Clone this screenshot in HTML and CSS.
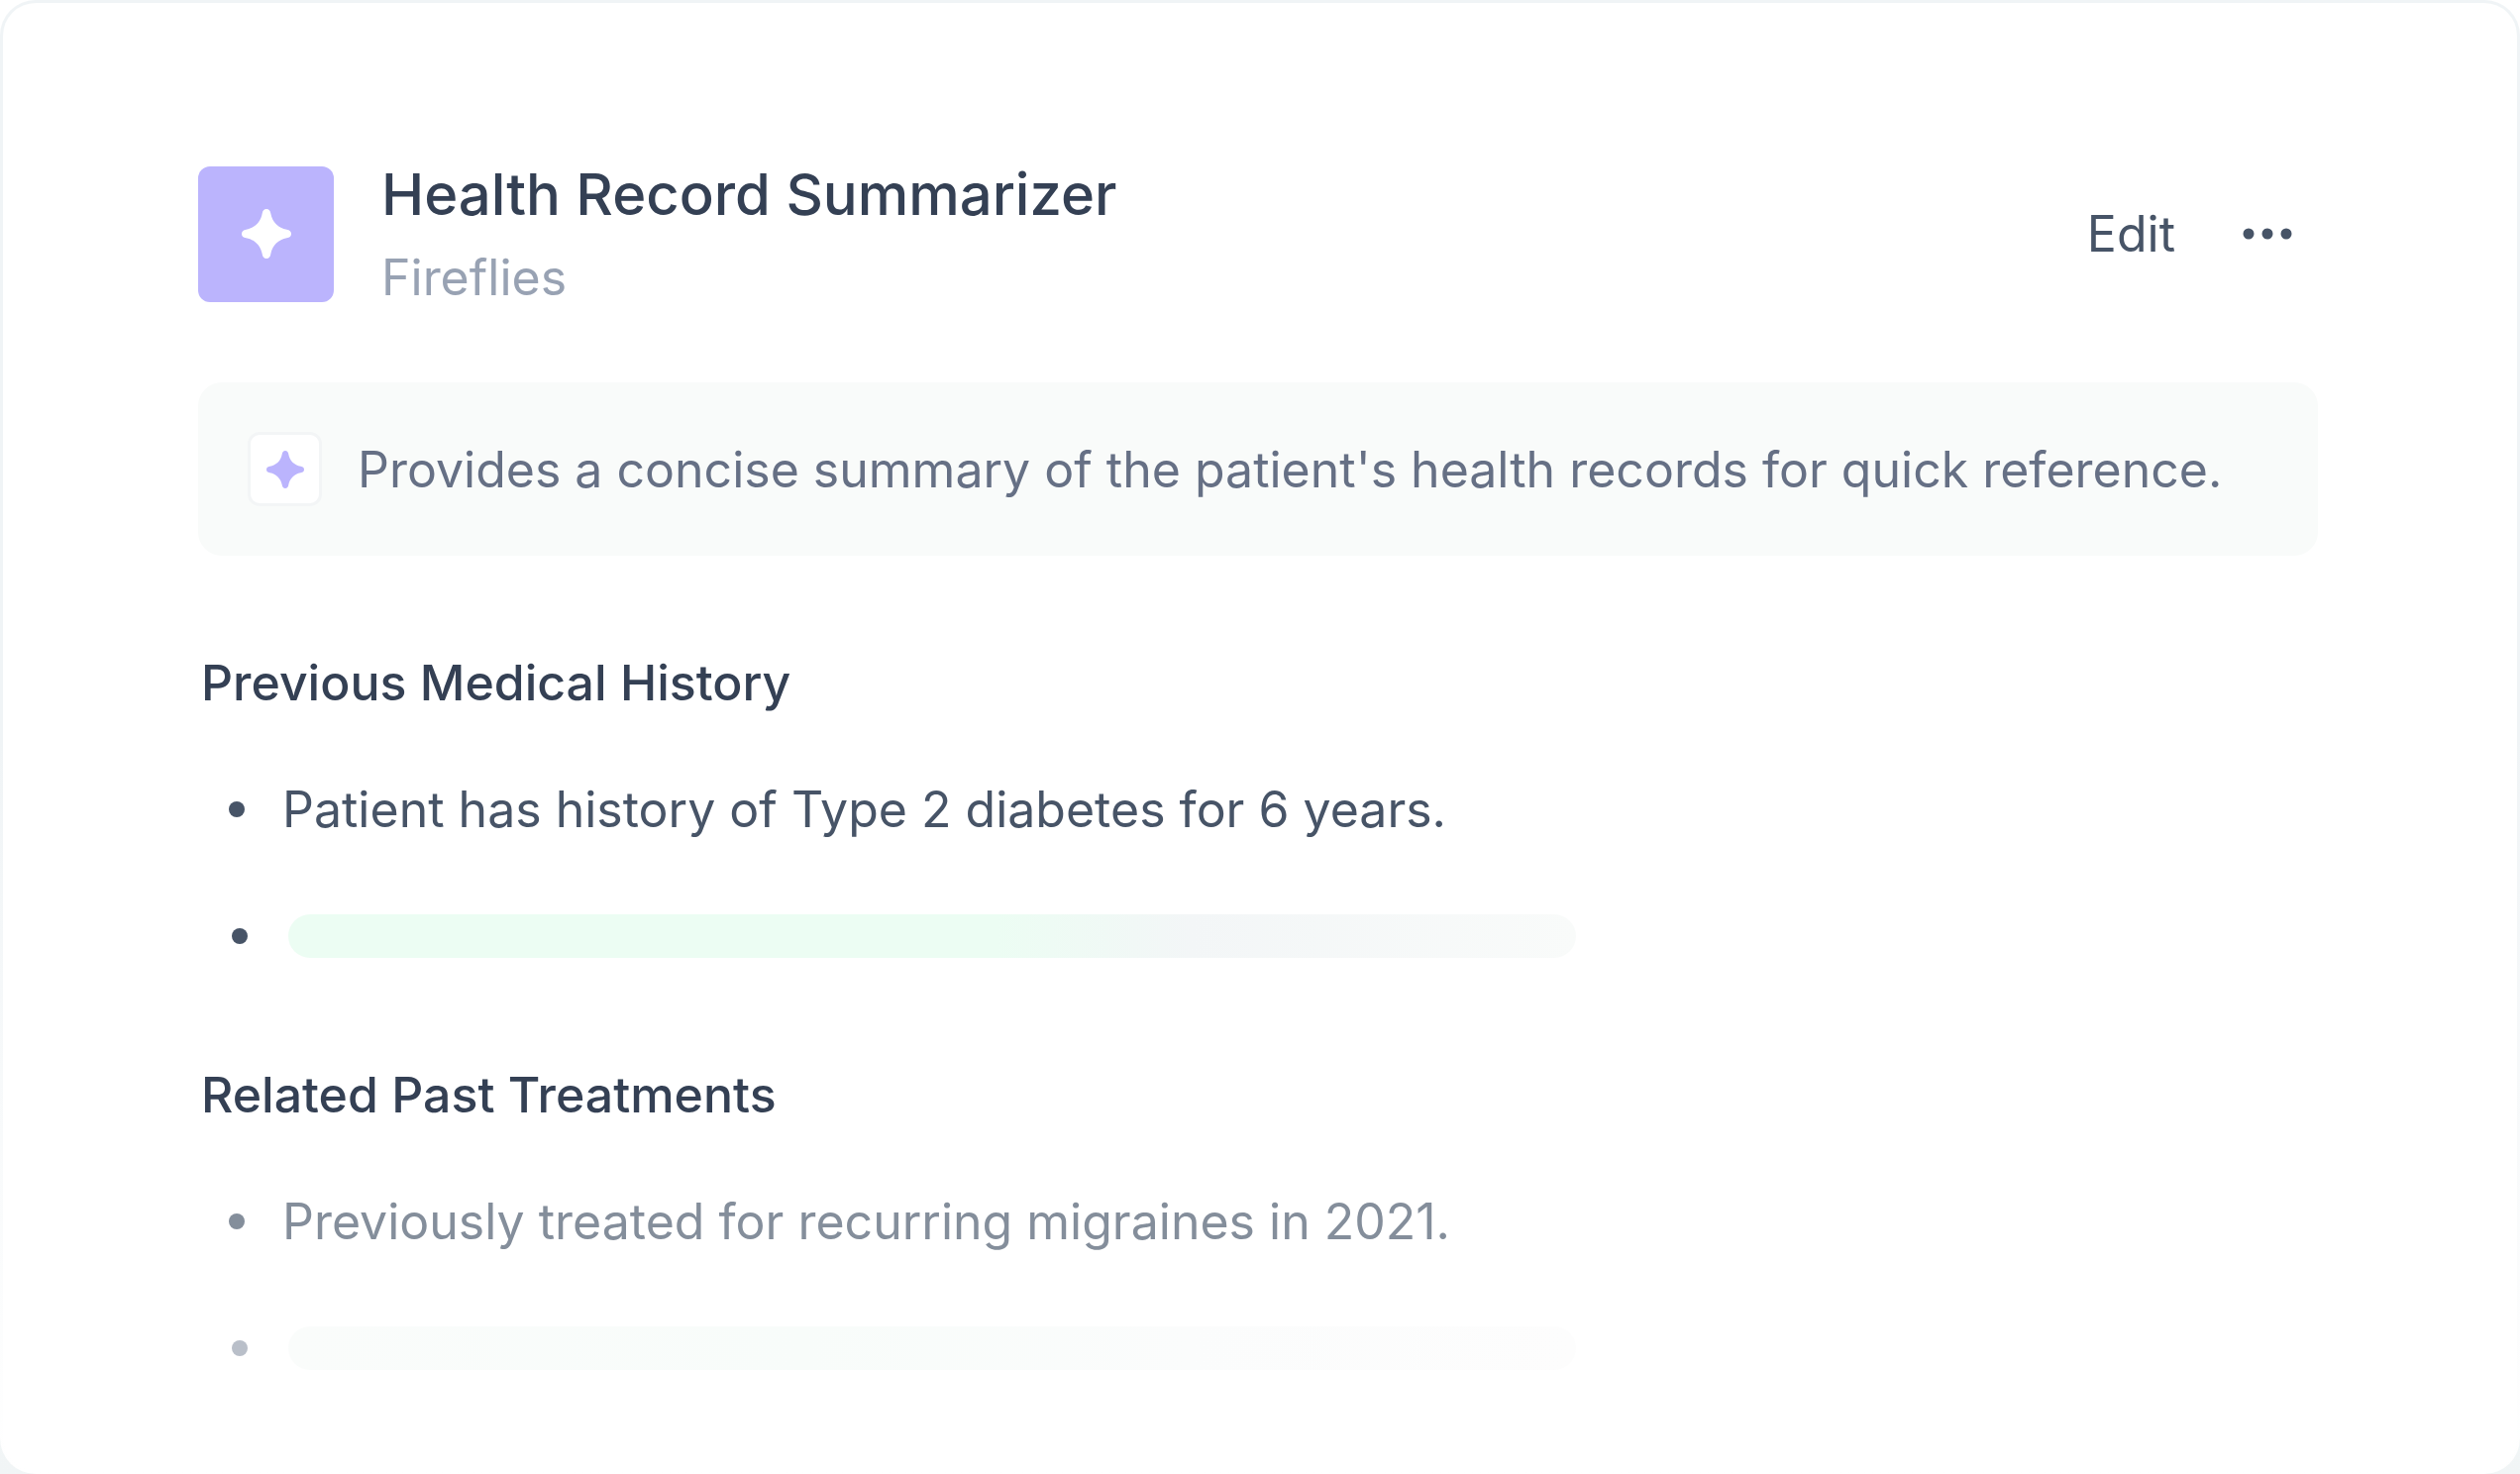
FILE: index.html
```
<!DOCTYPE html>
<html lang="en">
<head>
  <meta charset="UTF-8">
  <meta name="viewport" content="width=device-width, initial-scale=1.0">
  <title>Health Record Summarizer</title>
  <link rel="stylesheet" href="styles.css">
</head>
<body>
  <main class="card">
    <header class="card-header">
      <div class="app-icon">
        <svg viewBox="0 0 50 50" aria-hidden="true">
          <path d="M25 0C27.500 0 28.800 1.600 29.300 4.500C30.800 13 37 19.200 45.500 20.700C48.400 21.200 50 22.500 50 25C50 27.500 48.400 28.800 45.500 29.300C37 30.800 30.800 37 29.300 45.500C28.800 48.400 27.500 50 25 50C22.500 50 21.200 48.400 20.700 45.500C19.200 37 13 30.800 4.500 29.300C1.600 28.800 0 27.500 0 25C0 22.500 1.600 21.200 4.500 20.700C13 19.200 19.200 13 20.700 4.500C21.200 1.600 22.500 0 25 0Z"/>
        </svg>
      </div>
      <div class="heading">
        <h1 class="title">Health Record Summarizer</h1>
        <p class="subtitle">Fireflies</p>
      </div>
      <div class="actions">
        <button class="edit-btn" type="button">Edit</button>
        <button class="more-btn" type="button" aria-label="More">
          <svg viewBox="0 0 50 12" aria-hidden="true">
            <circle cx="6" cy="6" r="5.500"/>
            <circle cx="25" cy="6" r="5.500"/>
            <circle cx="44" cy="6" r="5.500"/>
          </svg>
        </button>
      </div>
    </header>

    <div class="notice">
      <div class="notice-icon">
        <svg viewBox="0 0 50 50" aria-hidden="true">
          <path d="M25 0C27.500 0 28.800 1.600 29.300 4.500C30.800 13 37 19.200 45.500 20.700C48.400 21.200 50 22.500 50 25C50 27.500 48.400 28.800 45.500 29.300C37 30.800 30.800 37 29.300 45.500C28.800 48.400 27.500 50 25 50C22.500 50 21.200 48.400 20.700 45.500C19.200 37 13 30.800 4.500 29.300C1.600 28.800 0 27.500 0 25C0 22.500 1.600 21.200 4.500 20.700C13 19.200 19.200 13 20.700 4.500C21.200 1.600 22.500 0 25 0Z"/>
        </svg>
      </div>
      <p class="notice-text">Provides a concise summary of the patient's health records for quick reference.</p>
    </div>

    <section class="section">
      <h2 class="section-title">Previous Medical History</h2>
      <ul class="list">
        <li class="list-item">Patient has history of Type 2 diabetes for 6 years.</li>
        <li class="list-item loading"><span class="skeleton"></span></li>
      </ul>
    </section>

    <section class="section faded">
      <h2 class="section-title">Related Past Treatments</h2>
      <ul class="list">
        <li class="list-item">Previously treated for recurring migraines in 2021.</li>
        <li class="list-item loading"><span class="skeleton"></span></li>
      </ul>
    </section>
  </main>
</body>
</html>
```

FILE: styles.css
```
* {
  box-sizing: border-box;
  margin: 0;
  padding: 0;
}
html {
  background: linear-gradient(#fff 50%, #f1f5f6);
}
body {
  font-family: Inter, "Liberation Sans", sans-serif;
  font-size: 50px;
  line-height: 64px;
  color: #475467;
}
.card {
  min-height: 100vh;
  padding: 157px 201px 64px 197px;
  border: 3px solid transparent;
  border-radius: 36px;
  /* the border fades out towards the bottom */
  background:
    linear-gradient(#fff, #fff) padding-box,
    linear-gradient(#f0f4f6 50%, #fff) border-box;
}

.card-header {
  display: flex;
  align-items: center;
}
.app-icon {
  display: flex;
  align-items: center;
  justify-content: center;
  width: 137px;
  height: 137px;
  border-radius: 12px;
  background-color: #bbb4fd;
}
.app-icon svg {
  width: 50px;
  height: 50px;
  fill: #fff;
}
.heading {
  flex: 1;
  margin-left: 48px;
}
.title {
  font-size: 58px;
  line-height: 72px;
  font-weight: 500;
  color: #344054;
}
.subtitle {
  margin-top: 16px;
  color: #98a2b3;
}
.actions {
  display: flex;
  align-items: center;
  gap: 68px;
  margin-right: 26px;
}
.actions button {
  border: none;
  background: none;
  font: inherit;
  color: inherit;
  cursor: pointer;
}
.more-btn {
  display: flex;
}
.more-btn svg {
  width: 50px;
  height: 12px;
  fill: #475467;
}

.notice {
  display: flex;
  align-items: center;
  gap: 36px;
  margin-top: 74px;
  padding: 50px;
  border-radius: 24px;
  background-color: #f9fbfa;
}
.notice-icon {
  display: flex;
  align-items: center;
  justify-content: center;
  width: 75px;
  height: 75px;
  border: 3px solid #f3f5f6;
  border-radius: 12px;
  background-color: #fff;
}
.notice-icon svg {
  width: 38px;
  height: 38px;
  fill: #bbb4fd;
}
.notice-text {
  color: #667085;
}

.section {
  margin-top: 96px;
}
.section-title {
  padding-left: 3px;
  font-size: 50px;
  font-weight: 500;
  color: #344054;
}
.list {
  list-style: none;
  margin-top: 64px;
}
.list-item {
  display: flex;
  align-items: center;
  gap: 38px;
  height: 64px;
  padding-left: 31px;
}
.list-item::before {
  content: "";
  width: 16px;
  height: 16px;
  border-radius: 50%;
  background-color: currentColor;
}
.list-item.loading {
  margin-top: 64px;
  padding-left: 34px;
  gap: 41px;
}
.skeleton {
  width: 1300px;
  height: 44px;
  border-radius: 22px;
  background: linear-gradient(90deg, #ecfdf3 55%, #f3f6f7 70%, #f9fbfa);
}
.faded .list-item {
  color: #848e9b;
}
.faded .list-item.loading {
  color: #b9bfc9;
}
.faded .skeleton {
  background: linear-gradient(90deg, #fafcfb, #f8fcfa 40%, #fbfcfc 70%, #fdfdfd);
}
```
